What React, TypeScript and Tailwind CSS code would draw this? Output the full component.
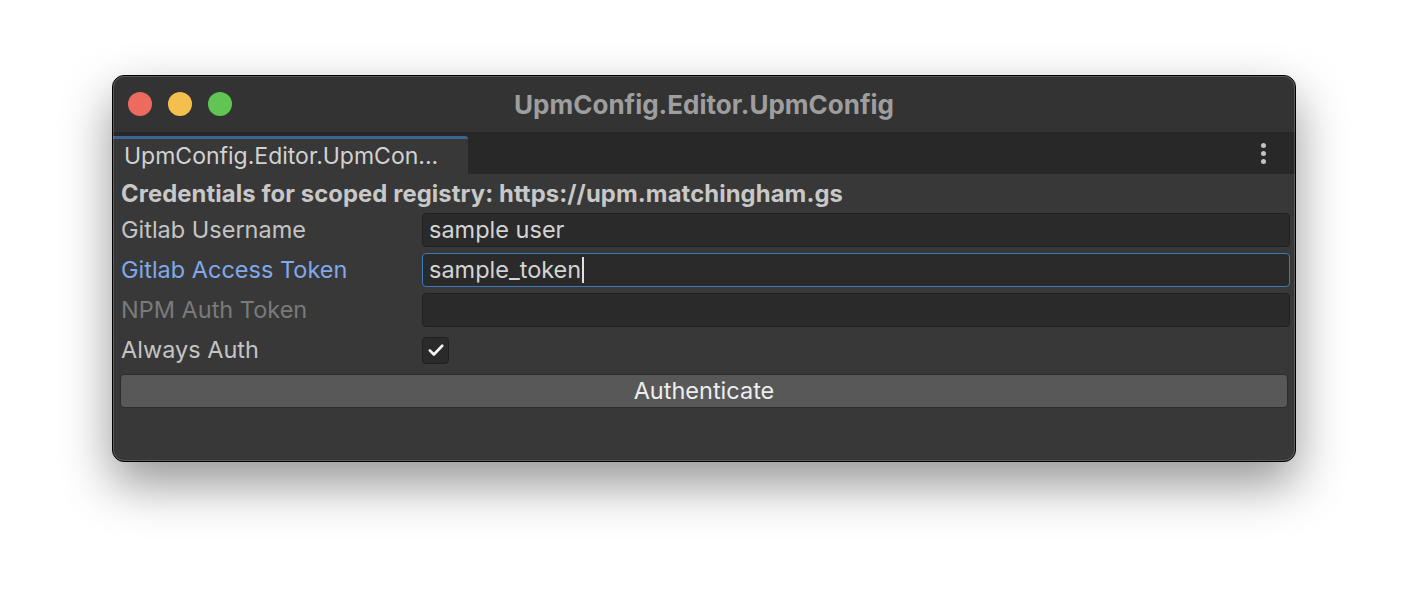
import { useState } from 'react';

interface Field {
  label: string;
  value: string;
  state: 'normal' | 'focused' | 'disabled';
}

const fields: Field[] = [
  { label: 'Gitlab Username', value: 'sample user', state: 'normal' },
  { label: 'Gitlab Access Token', value: 'sample_token', state: 'focused' },
  { label: 'NPM Auth Token', value: '', state: 'disabled' },
];

export default function App() {
  const [alwaysAuth, setAlwaysAuth] = useState(true);

  return (
    <div className="w-[1408px] h-[610px] bg-white pt-[75px] font-['Inter',sans-serif]">
      {/* Window */}
      <div className="relative mx-auto w-[1184px] h-[387px] rounded-[12px] border border-black bg-[#383838] overflow-hidden shadow-[0_22px_50px_rgba(0,0,0,0.42)] flex flex-col">
        {/* Title bar */}
        <div className="relative h-[56px] shrink-0 bg-[#333333] flex items-center">
          <div className="flex items-center gap-[16px] pl-[15px]">
            <span className="w-[24px] h-[24px] rounded-full bg-[#ed6a5e]" />
            <span className="w-[24px] h-[24px] rounded-full bg-[#f5bf4f]" />
            <span className="w-[24px] h-[24px] rounded-full bg-[#61c554]" />
          </div>
          <div className="absolute inset-0 flex items-center justify-center text-[26px] font-bold text-[#9e9e9e] pointer-events-none">
            UpmConfig.Editor.UpmConfig
          </div>
        </div>

        {/* Tab bar */}
        <div className="h-[42px] shrink-0 bg-[#282828] flex items-end justify-between">
          <div className="w-[355px] h-[38px] bg-[#383838] border-t-[3px] border-[#3b6394] rounded-tr-[3px] flex items-center pl-[11px] text-[23px] text-[#d2d2d2]">
            UpmConfig.Editor.UpmCon...
          </div>
          <div className="self-center flex flex-col gap-[3px] mr-[29px]">
            <span className="w-[5px] h-[5px] rounded-full bg-[#c4c4c4]" />
            <span className="w-[5px] h-[5px] rounded-full bg-[#c4c4c4]" />
            <span className="w-[5px] h-[5px] rounded-full bg-[#c4c4c4]" />
          </div>
        </div>

        {/* Content */}
        <div className="flex-1 flex flex-col pl-[7px] pr-[5px]">
          <div className="h-[39px] flex items-center pl-[1px] text-[23.8px] font-bold text-[#c8c8c8] tracking-[0.1px]">
            Credentials for scoped registry: https://upm.matchingham.gs
          </div>

          {fields.map((f) => (
            <div key={f.label} className="h-[40px] flex items-start">
              <div
                className={`w-[302px] h-[34px] flex items-center pl-[1px] text-[23.5px] ${
                  f.state === 'focused'
                    ? 'text-[#7fa9eb]'
                    : f.state === 'disabled'
                    ? 'text-[#7a7a7a]'
                    : 'text-[#c4c4c4]'
                }`}
              >
                {f.label}
              </div>
              <div
                className={`flex-1 h-[34px] rounded-[4px] border bg-[#2a2a2a] flex items-center pl-[6px] text-[23.5px] text-[#d4d4d4] ${
                  f.state === 'focused' ? 'border-[#3f78bf]' : 'border-[#212121]'
                }`}
              >
                {f.value}
                {f.state === 'focused' && <span className="w-[1.5px] h-[26px] bg-[#e0e0e0] ml-[1px]" />}
              </div>
            </div>
          ))}

          <div className="h-[41px] flex items-start">
            <div className="w-[302px] h-[34px] flex items-center pl-[1px] text-[23.5px] text-[#c4c4c4]">Always Auth</div>
            <div className="h-[34px] flex items-center">
              <button
                onClick={() => setAlwaysAuth(!alwaysAuth)}
                className="w-[27px] h-[27px] rounded-[4px] border border-[#202020] bg-[#2a2a2a] flex items-center justify-center"
              >
                {alwaysAuth && (
                  <svg width="20" height="20" viewBox="0 0 16 16" fill="none">
                    <path d="M3 8.3l3.3 3.3L13 4.6" stroke="#f4f4f4" strokeWidth="2.1" strokeLinecap="round" strokeLinejoin="round" />
                  </svg>
                )}
              </button>
            </div>
          </div>

          <button className="h-[34px] mr-[2px] rounded-[4px] border border-[#2c2c2c] bg-[#585858] text-[23.5px] text-[#eeeeee] flex items-center justify-center">
            Authenticate
          </button>
        </div>

        {/* inner edge highlight */}
        <div className="absolute inset-0 rounded-[11px] shadow-[inset_0_0_0_1px_rgba(255,255,255,0.18)] pointer-events-none" />
      </div>
    </div>
  );
}
